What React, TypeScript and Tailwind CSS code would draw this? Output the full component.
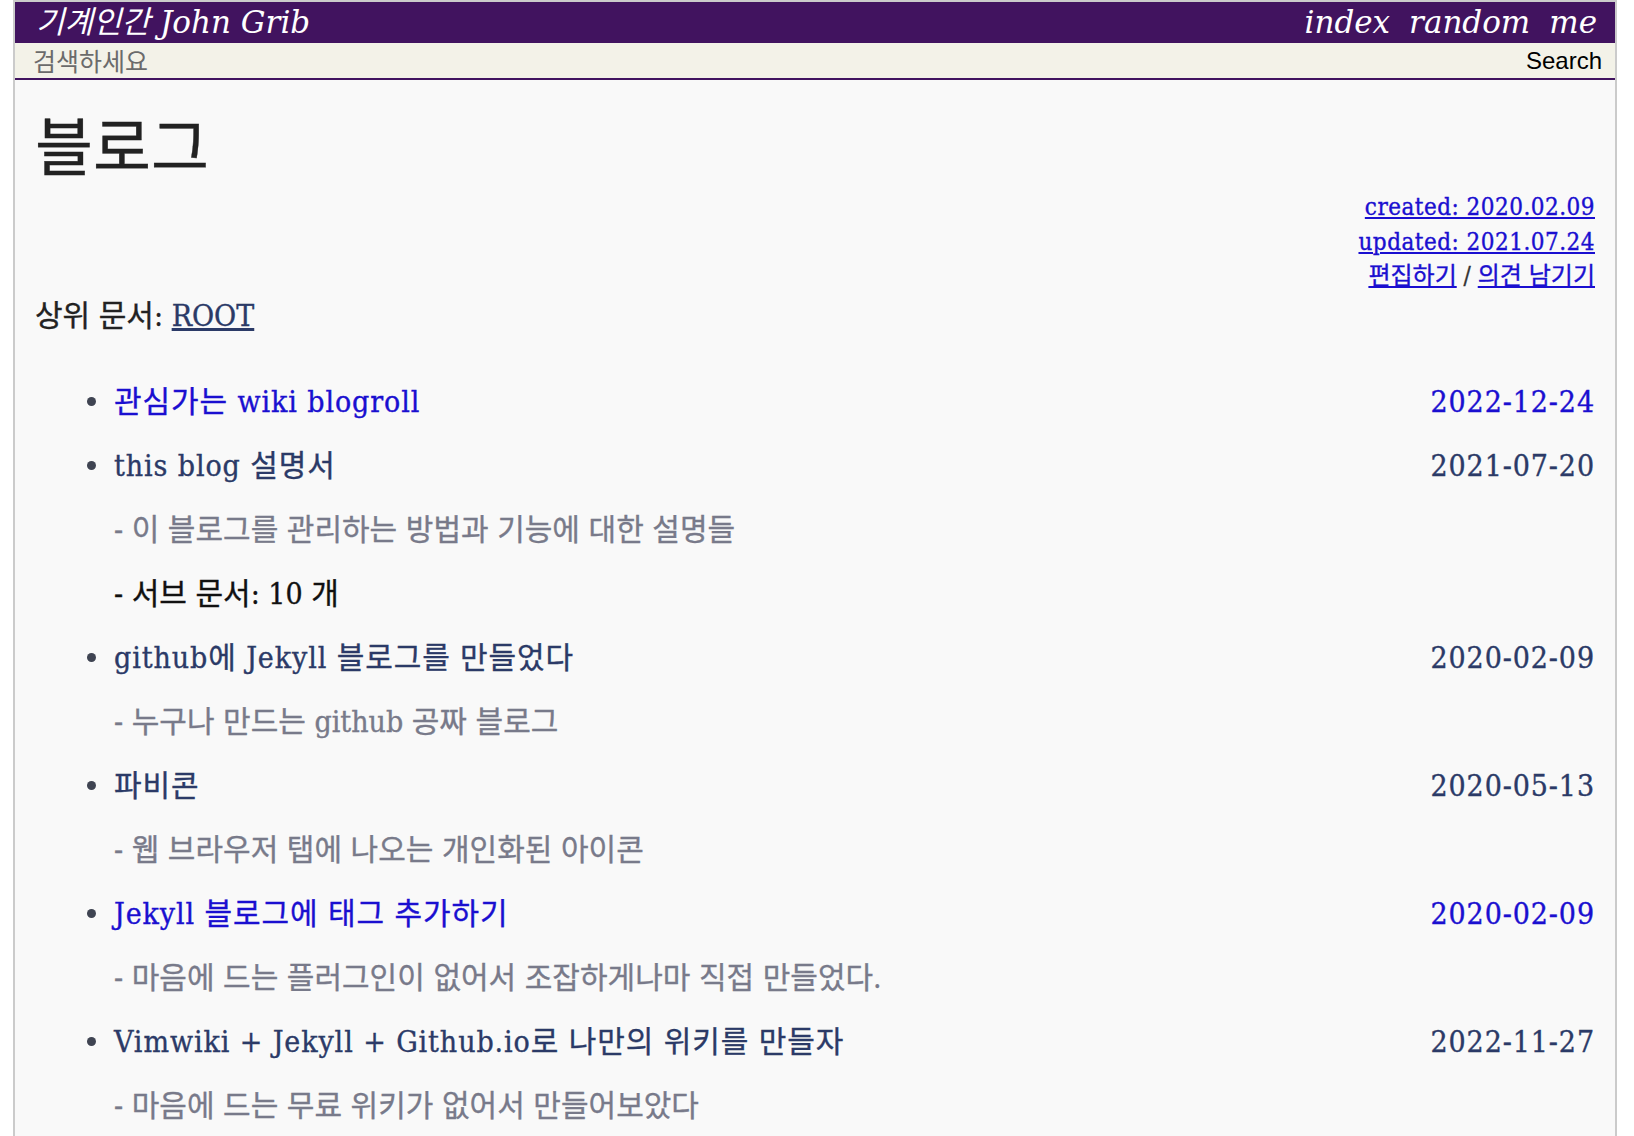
import React from "react";

const slab =
  "[font-family:'DejaVu_Serif_Condensed','DejaVu_Serif','Noto_Sans_CJK_KR',serif]";

type Post = {
  title: string;
  date: string;
  visited?: boolean;
  lines?: { text: string; dark?: boolean }[];
};

const posts: Post[] = [
  { title: "관심가는 wiki blogroll", date: "2022-12-24", visited: true },
  {
    title: "this blog 설명서",
    date: "2021-07-20",
    lines: [
      { text: "- 이 블로그를 관리하는 방법과 기능에 대한 설명들" },
      { text: "- 서브 문서: 10 개", dark: true },
    ],
  },
  {
    title: "github에 Jekyll 블로그를 만들었다",
    date: "2020-02-09",
    lines: [{ text: "- 누구나 만드는 github 공짜 블로그" }],
  },
  {
    title: "파비콘",
    date: "2020-05-13",
    lines: [{ text: "- 웹 브라우저 탭에 나오는 개인화된 아이콘" }],
  },
  {
    title: "Jekyll 블로그에 태그 추가하기",
    date: "2020-02-09",
    visited: true,
    lines: [{ text: "- 마음에 드는 플러그인이 없어서 조잡하게나마 직접 만들었다." }],
  },
  {
    title: "Vimwiki + Jekyll + Github.io로 나만의 위키를 만들자",
    date: "2022-11-27",
    lines: [{ text: "- 마음에 드는 무료 위키가 없어서 만들어보았다" }],
  },
];

export default function App() {
  return (
    <div className={`min-h-screen bg-white ${slab}`}>
      <div className="ml-[13px] w-[1604px] min-h-[1140px] border-2 border-[#cbcbcb] bg-[#f9f9f9]">
        {/* top bar */}
        <header className="flex h-[41px] items-center justify-between bg-[#41135f] pl-[21px] pr-[18px] text-[31px] italic leading-none text-white [font-family:'DejaVu_Serif','Noto_Sans_CJK_KR',serif]">
          <a href="#">기계인간 John Grib</a>
          <nav className="flex gap-[19px]">
            <a href="#">index</a>
            <a href="#">random</a>
            <a href="#">me</a>
          </nav>
        </header>

        {/* search */}
        <div className="flex h-[37px] items-center justify-between border-b-2 border-[#41135f] bg-[#f3f2e8] pl-[18px] pr-[13px]">
          <span className="text-[25px] leading-none text-[#6b6b6b] [font-family:'Noto_Sans_CJK_KR',sans-serif]">
            검색하세요
          </span>
          <span className="text-[24px] leading-none text-black [font-family:'Liberation_Sans',Arial,sans-serif]">
            Search
          </span>
        </div>

        <main className="px-5 [-webkit-text-stroke:0.35px]">
          <h1 className="mt-[31px] text-[63px] leading-[64px] text-[#222] [font-family:'Noto_Sans_CJK_KR',sans-serif]">
            블로그
          </h1>

          <div className="mt-[15px] flex flex-col items-end text-[24px] leading-[34.5px] text-[#1a0fd0]">
            <a href="#" className="underline tracking-[0.02em]">created: 2020.02.09</a>
            <a href="#" className="underline tracking-[0.02em]">updated: 2021.07.24</a>
            <div>
              <a href="#" className="underline">편집하기</a>
              <span className="text-[#333]"> / </span>
              <a href="#" className="underline">의견 남기기</a>
            </div>
          </div>

          <p className="mt-[2px] text-[30px] leading-[40px] text-[#222]">
            상위 문서:{" "}
            <a href="#" className="text-[#2b3a67] underline">ROOT</a>
          </p>

          <ul className="mt-[34px] pl-[52px] text-[30px]">
            {posts.map((p) => {
              const color = p.visited ? "text-[#1a0fd0]" : "text-[#2b3a67]";
              return (
                <li key={p.title}>
                  <div className="flex h-[64px] items-center tracking-[0.03em]">
                    <span className="mr-[18px] h-[9px] w-[9px] shrink-0 rounded-full bg-[#3f4452]" />
                    <a href="#" className={`flex-1 ${color}`}>{p.title}</a>
                    <span className={color}>{p.date}</span>
                  </div>
                  {p.lines?.map((l) => (
                    <p
                      key={l.text}
                      className={`flex h-[64px] items-center pl-[27px] ${l.dark ? "text-[#111]" : "text-[#787a8a]"}`}
                    >
                      {l.text}
                    </p>
                  ))}
                </li>
              );
            })}
          </ul>
        </main>
      </div>
    </div>
  );
}
